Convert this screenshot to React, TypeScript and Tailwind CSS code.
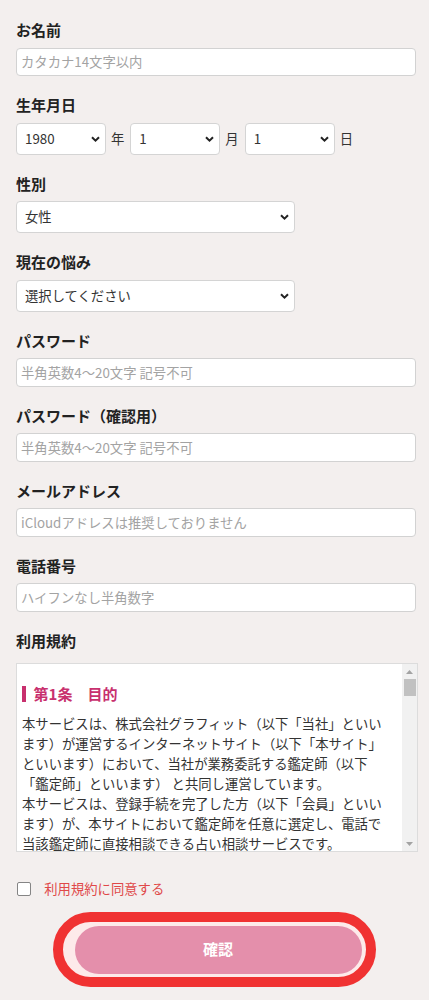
import React from "react";

function Label({ children, className = "" }: { children: React.ReactNode; className?: string }) {
  return (
    <div className={`text-[15px] font-bold leading-[20px] text-[#222] ${className}`}>{children}</div>
  );
}

function Chevron() {
  return (
    <svg
      width="9"
      height="6"
      viewBox="0 0 9 6"
      className="pointer-events-none absolute right-[6px] top-1/2 -translate-y-1/2"
    >
      <path d="M1 1.2 L4.5 4.6 L8 1.2" fill="none" stroke="#222" strokeWidth="2" />
    </svg>
  );
}

function Select({ width, value, options }: { width: string; value: string; options: string[] }) {
  return (
    <div className={`relative ${width}`}>
      <select
        defaultValue={value}
        className="block h-[32px] w-full appearance-none rounded-[4px] border border-[#d4d4d4] bg-white pl-[8px] pr-[20px] text-[13.33px] text-[#333] outline-none"
      >
        {options.map((o) => (
          <option key={o} value={o}>
            {o}
          </option>
        ))}
      </select>
      <Chevron />
    </div>
  );
}

function TextInput({ placeholder, type = "text" }: { placeholder: string; type?: string }) {
  return (
    <input
      type={type}
      placeholder={placeholder}
      className="block h-[28.5px] w-full rounded-[4px] border border-[#d2d2d2] bg-white pl-[4px] text-[13.33px] text-[#333] outline-none placeholder:text-[#a3a3a3]"
    />
  );
}

function UpTri() {
  return (
    <svg width="7" height="4" viewBox="0 0 7 4">
      <path d="M0 4 L3.5 0 L7 4 Z" fill="#a3a3a3" />
    </svg>
  );
}
function DownTri() {
  return (
    <svg width="7" height="4" viewBox="0 0 7 4">
      <path d="M0 0 L3.5 4 L7 0 Z" fill="#a3a3a3" />
    </svg>
  );
}

export default function App() {
  const years = Array.from({ length: 80 }, (_, i) => String(1940 + i));
  const months = Array.from({ length: 12 }, (_, i) => String(i + 1));
  const days = Array.from({ length: 31 }, (_, i) => String(i + 1));
  return (
    <div className="min-h-[1000px] bg-[#f3efee] pl-[16px] pr-[13px] pt-[20px] pb-[13px] font-['Noto_Sans_CJK_JP',sans-serif]">
      {/* お名前 */}
      <div className="mb-[19px]">
        <Label className="mb-[7.5px]">お名前</Label>
        <TextInput placeholder="カタカナ14文字以内" />
      </div>

      {/* 生年月日 */}
      <div className="mb-[19px]">
        <Label className="mb-[7.5px]">生年月日</Label>
        <div className="flex items-center text-[13.33px] text-[#333]">
          <Select width="w-[90px]" value="1980" options={years} />
          <span className="ml-[5px] mr-[6px]">年</span>
          <Select width="w-[90px]" value="1" options={months} />
          <span className="ml-[5px] mr-[6px]">月</span>
          <Select width="w-[90px]" value="1" options={days} />
          <span className="ml-[5px]">日</span>
        </div>
      </div>

      {/* 性別 */}
      <div className="mb-[19px]">
        <Label className="mb-[7.5px]">性別</Label>
        <Select width="w-[279px]" value="女性" options={["男性", "女性"]} />
      </div>

      {/* 現在の悩み */}
      <div className="mb-[19px]">
        <Label className="mb-[7.5px]">現在の悩み</Label>
        <Select
          width="w-[279px]"
          value="選択してください"
          options={["選択してください", "恋愛", "結婚", "仕事", "人間関係", "その他"]}
        />
      </div>

      {/* パスワード */}
      <div className="mb-[19px]">
        <Label className="mb-[7.5px]">パスワード</Label>
        <TextInput type="password" placeholder="半角英数4～20文字 記号不可" />
      </div>

      {/* パスワード（確認用） */}
      <div className="mb-[19px]">
        <Label className="mb-[7.5px]">パスワード（確認用）</Label>
        <TextInput type="password" placeholder="半角英数4～20文字 記号不可" />
      </div>

      {/* メールアドレス */}
      <div className="mb-[19px]">
        <Label className="mb-[7.5px]">メールアドレス</Label>
        <TextInput placeholder="iCloudアドレスは推奨しておりません" />
      </div>

      {/* 電話番号 */}
      <div className="mb-[19px]">
        <Label className="mb-[7.5px]">電話番号</Label>
        <TextInput placeholder="ハイフンなし半角数字" />
      </div>

      {/* 利用規約 */}
      <div>
        <Label className="mb-[12.5px]">利用規約</Label>
        <div className="mr-[-2px] flex h-[189px] border border-[#dcdcdc] bg-white">
          <div className="flex-1 overflow-hidden pl-[5px] pt-[20px]">
            <div className="flex h-[20px] items-center">
              <div className="h-[16px] w-[4px] bg-[#c8306e]"></div>
              <span className="ml-[7.6px] text-[15px] font-bold leading-[20px] text-[#c8306e]">
                第1条　目的
              </span>
            </div>
            <div className="mt-[10.3px] whitespace-nowrap text-[13.33px] leading-[20px] text-[#333]">
              <p>
                本サービスは、株式会社グラフィット（以下「当社」といい
                <br />
                ます）が運営するインターネットサイト（以下「本サイト」
                <br />
                といいます）において、当社が業務委託する鑑定師（以下
                <br />
                「鑑定師」といいます） と共同し運営しています。
              </p>
              <p>
                本サービスは、登録手続を完了した方（以下「会員」といい
                <br />
                ます）が、本サイトにおいて鑑定師を任意に選定し、電話で
                <br />
                当該鑑定師に直接相談できる占い相談サービスです。
              </p>
            </div>
          </div>
          <div className="flex w-[15px] flex-col bg-[#f1f1f1]">
            <div className="flex h-[15px] items-center justify-center">
              <UpTri />
            </div>
            <div className="ml-[2px] h-[17px] w-[12px] bg-[#c1c1c1]"></div>
            <div className="flex-1"></div>
            <div className="flex h-[15px] items-center justify-center">
              <DownTri />
            </div>
          </div>
        </div>
      </div>

      {/* 同意 */}
      <div className="mt-[27px] flex h-[20px] items-center">
        <input
          type="checkbox"
          className="ml-[1.3px] h-[14px] w-[14px] appearance-none rounded-[2px] border border-[#858585] bg-white"
        />
        <span className="ml-[13px] text-[13.33px] leading-[20px] text-[#e04848]">利用規約に同意する</span>
      </div>

      {/* 確認ボタン */}
      <div className="mt-[13px] ml-[37px] box-border h-[75px] w-[323px] rounded-full border-[10px] border-[#f03232] bg-[#fdeaea] py-[3.5px] pl-[11.5px] pr-[4.5px]">
        <button className="h-full w-full rounded-full bg-[#e48fab] text-[15px] font-bold text-white">確認</button>
      </div>
    </div>
  );
}
